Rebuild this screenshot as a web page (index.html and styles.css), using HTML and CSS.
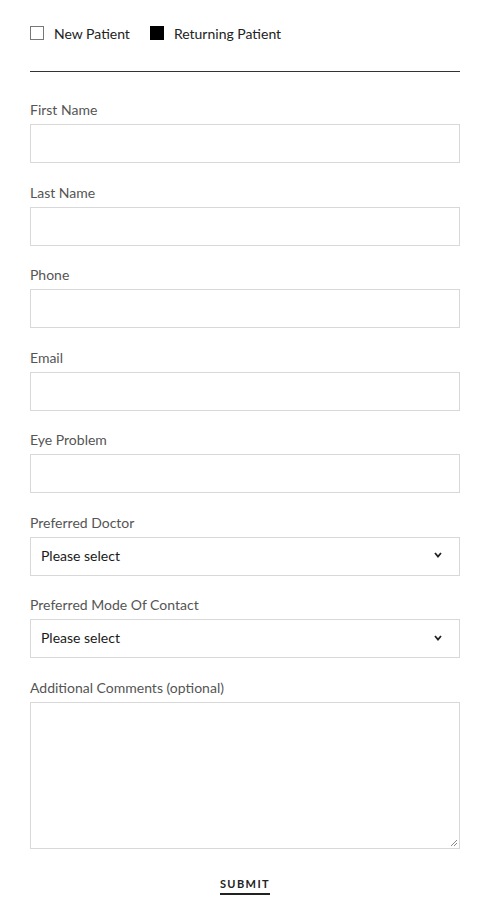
FILE: index.html
```html
<!DOCTYPE html>
<html>
<head>
<meta charset="utf-8">
<link rel="stylesheet" href="styles.css">
</head>
<body>
<form class="form">
  <div class="patient-type">
    <label class="check"><span class="box"></span>New Patient</label>
    <label class="check"><span class="box checked"></span>Returning Patient</label>
  </div>
  <hr class="rule">
  <div class="field"><label class="label">First Name</label><div class="input"></div></div>
  <div class="field"><label class="label">Last Name</label><div class="input"></div></div>
  <div class="field"><label class="label">Phone</label><div class="input"></div></div>
  <div class="field"><label class="label">Email</label><div class="input"></div></div>
  <div class="field"><label class="label">Eye Problem</label><div class="input"></div></div>
  <div class="field"><label class="label">Preferred Doctor</label>
    <div class="input select"><span>Please select</span>
      <svg class="chev" width="8" height="6" viewBox="0 0 8 6"><path d="M1 1 L4 4.5 L7 1" fill="none" stroke="#222" stroke-width="1.8"/></svg>
    </div>
  </div>
  <div class="field"><label class="label">Preferred Mode Of Contact</label>
    <div class="input select"><span>Please select</span>
      <svg class="chev" width="8" height="6" viewBox="0 0 8 6"><path d="M1 1 L4 4.5 L7 1" fill="none" stroke="#222" stroke-width="1.8"/></svg>
    </div>
  </div>
  <div class="field"><label class="label">Additional Comments (optional)</label>
    <div class="input textarea">
      <svg class="grip" width="9" height="9" viewBox="0 0 9 9"><path d="M8 2 L2 8 M8 5 L5 8" stroke="#888" stroke-width="1"/></svg>
    </div>
  </div>
  <div class="actions"><span class="submit">SUBMIT</span></div>
</form>
</body>
</html>
```

FILE: styles.css
```css
html, body {
  margin: 0;
  padding: 0;
  background: #fff;
}
body {
  font-family: Lato, "Open Sans", Arial, sans-serif;
  color: #333;
}
.form {
  padding: 24px 30px 0 30px;
}
.patient-type {
  display: flex;
  align-items: center;
  gap: 20px;
  height: 18px;
}
.check {
  display: flex;
  align-items: center;
  gap: 10px;
  font-size: 14px;
  color: #222;
}
.box {
  width: 12px;
  height: 12px;
  border: 1px solid #777;
  background: #fff;
}
.box.checked {
  background: #000;
  border-color: #000;
}
.rule {
  margin: 29px 0 0 0;
  border: 0;
  border-top: 1.5px solid #333;
  height: 0;
}
.field {
  display: flex;
  flex-direction: column;
}
.rule + .field {
  margin-top: 28px;
}
.label {
  font-size: 14px;
  line-height: 20px;
  color: #555;
  margin-bottom: 4px;
}
.input {
  height: 37px;
  border: 1px solid #d8d8d8;
  margin-bottom: 19.5px;
  box-sizing: content-box;
}
.select {
  display: flex;
  align-items: center;
  justify-content: space-between;
  padding: 0 17px 2px 10px;
  height: 35px;
  font-size: 14px;
  color: #1a1a1a;
}
.textarea {
  height: 145px;
  position: relative;
  margin-bottom: 28px;
}
.grip {
  position: absolute;
  right: 1px;
  bottom: 1px;
}
.actions {
  display: flex;
  justify-content: center;
}
.submit {
  font-size: 11px;
  font-weight: 700;
  letter-spacing: 1.4px;
  color: #222;
  padding-bottom: 3px;
  border-bottom: 2px solid #222;
}
```
